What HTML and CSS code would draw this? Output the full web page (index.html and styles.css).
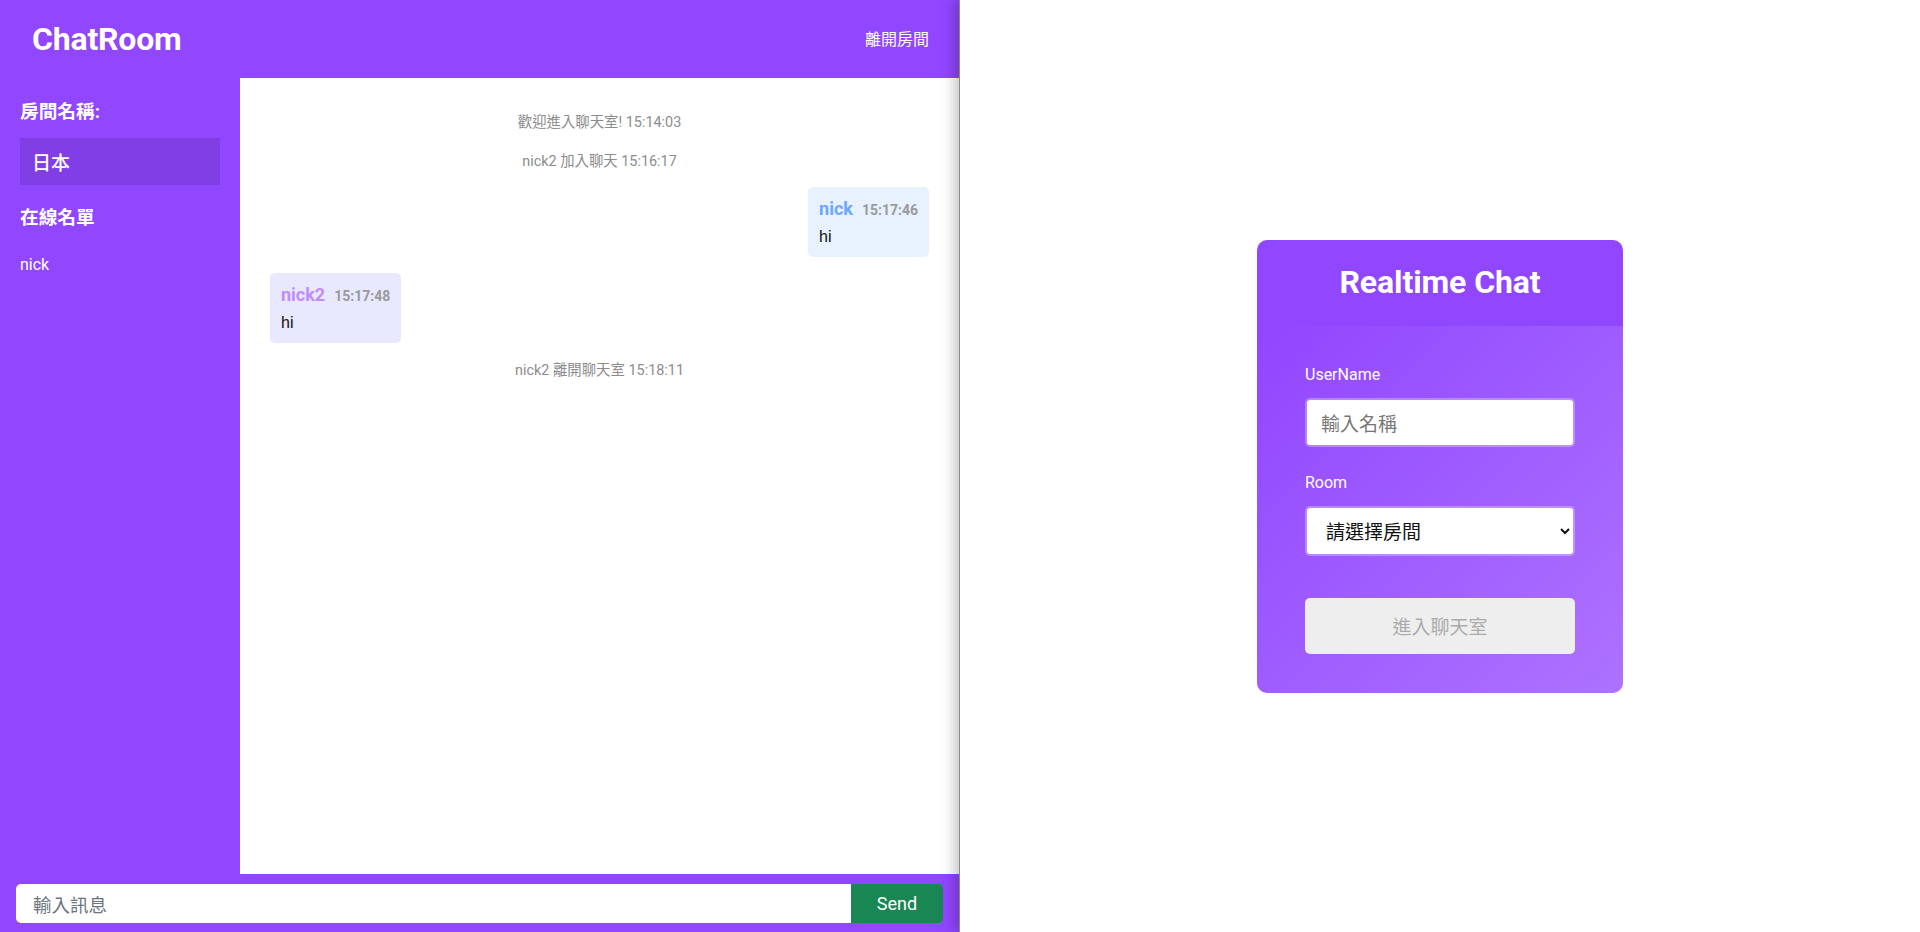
FILE: index.html
```html
<!DOCTYPE html>
<html lang="zh-Hant">
<head>
<meta charset="utf-8">
<title>ChatRoom</title>
<link rel="stylesheet" href="styles.css">
</head>
<body>
  <div class="left">
    <header class="topbar">
      <h1 class="brand">ChatRoom</h1>
      <a class="leave">離開房間</a>
    </header>
    <div class="main">
      <aside class="sidebar">
        <h3 class="side-title">房間名稱:</h3>
        <div class="room-name">日本</div>
        <h3 class="side-title users-title">在線名單</h3>
        <ul class="users">
          <li>nick</li>
        </ul>
      </aside>
      <section class="chat">
        <div class="sys">歡迎進入聊天室! 15:14:03</div>
        <div class="sys sys-last">nick2 加入聊天 15:16:17</div>
        <div class="bubble self">
          <div class="meta"><span class="name">nick</span><span class="time">15:17:46</span></div>
          <div class="text">hi</div>
        </div>
        <div class="bubble other">
          <div class="meta"><span class="name">nick2</span><span class="time">15:17:48</span></div>
          <div class="text">hi</div>
        </div>
        <div class="sys">nick2 離開聊天室 15:18:11</div>
      </section>
    </div>
    <form class="composer">
      <input class="msg-input" type="text" placeholder="輸入訊息">
      <button class="send" type="button">Send</button>
    </form>
  </div>
  <div class="right">
    <div class="card">
      <div class="card-head">
        <h2 class="card-title">Realtime Chat</h2>
      </div>
      <div class="card-body">
        <label class="label">UserName</label>
        <input class="field" type="text" placeholder="輸入名稱">
        <label class="label room-label">Room</label>
        <select class="field select">
          <option>請選擇房間</option>
        </select>
        <button class="join" type="button" disabled>進入聊天室</button>
      </div>
    </div>
  </div>
</body>
</html>
```

FILE: styles.css
```css
* { box-sizing: border-box; }

html, body {
  margin: 0;
  height: 100%;
}

body {
  display: flex;
  height: 932px;
  font-family: Roboto, "Noto Sans CJK TC", sans-serif;
  background: #ffffff;
  overflow: hidden;
}

.left {
  width: 959px;
  flex: none;
  display: flex;
  flex-direction: column;
  background: #9146ff;
  color: #fff;
}

.topbar {
  height: 78px;
  flex: none;
  display: flex;
  align-items: center;
  justify-content: space-between;
  padding: 0 30px 0 32px;
}

.brand {
  margin: 0;
  font-size: 32px;
  font-weight: 700;
  line-height: 40px;
  letter-spacing: -0.2px;
}

.leave {
  font-size: 16px;
  line-height: 22px;
  margin-bottom: 2px;
  color: #fff;
  font-family: "Noto Sans CJK TC", sans-serif;
  cursor: pointer;
}

.main {
  flex: 1;
  display: flex;
  min-height: 0;
}

.sidebar {
  width: 240px;
  flex: none;
  padding: 20px 20px;
}

.side-title {
  margin: 0;
  font-size: 18.7px;
  font-weight: 700;
  line-height: 28px;
}

.room-name {
  margin-top: 12px;
  height: 47px;
  display: flex;
  align-items: center;
  padding-left: 12px;
  background: rgba(0, 0, 0, 0.1);
  font-size: 19px;
  font-weight: 500;
}

.users-title {
  margin-top: 19px;
}

.users {
  list-style: none;
  margin: 21px 0 0;
  padding: 0;
  font-size: 16px;
  line-height: 24px;
}

.chat {
  flex: 1;
  background: #fff;
  padding: 33px 30px;
  display: flex;
  flex-direction: column;
  align-items: flex-start;
}

.sys {
  align-self: stretch;
  text-align: center;
  font-size: 14.4px;
  line-height: 23px;
  color: #8c8c8c;
  margin-bottom: 16px;
}

.sys.sys-last {
  margin-bottom: 14px;
}

.bubble {
  border-radius: 5px;
  padding: 8px 11px 8px;
  margin-bottom: 16px;
}

.bubble.self {
  align-self: flex-end;
  background: #e7f1ff;
}

.bubble.other {
  background: #e8e8ff;
}

.meta {
  font-size: 18px;
  line-height: 28px;
  height: 28px;
  white-space: nowrap;
}

.name {
  font-size: 18px;
  font-weight: 700;
}

.self .name { color: #6ea8fe; }
.other .name { color: #be8cff; }

.time {
  margin-left: 9px;
  font-size: 14px;
  line-height: 1;
  font-weight: 700;
  color: #9a9a9a;
}

.text {
  margin-top: 2px;
  font-family: "Liberation Sans", Arial, sans-serif;
  font-size: 16px;
  line-height: 24px;
  height: 24px;
  color: #111;
}

.composer {
  height: 58px;
  flex: none;
  margin: 0;
  display: flex;
  padding: 10px 16px 9px;
}

.msg-input {
  flex: 1;
  height: 39px;
  border: none;
  border-radius: 5px 0 0 5px;
  padding: 0 17px;
  font-family: "Noto Sans CJK TC", Roboto, sans-serif;
  font-size: 18.5px;
  color: #222;
  outline: none;
  background: #fff;
}

.msg-input::placeholder { color: #6c757d; }

.send {
  width: 92px;
  height: 39px;
  border: none;
  border-radius: 0 5px 5px 0;
  background: #198754;
  color: #fff;
  font-family: Roboto, sans-serif;
  font-size: 18px;
  padding: 0;
}

.right {
  flex: 1;
  position: relative;
  border-left: 1px solid #8a8a8a;
  box-shadow: -5px 0 12px rgba(0, 0, 0, 0.22);
  background: #fff;
  display: flex;
  align-items: center;
  justify-content: center;
}

.card {
  width: 366px;
  border-radius: 10px;
  overflow: hidden;
  color: #fff;
}

.card-head {
  height: 86px;
  background: #9146ff;
  display: flex;
  align-items: center;
  justify-content: center;
}

.card-title {
  margin: 0 0 2px;
  font-size: 32px;
  font-weight: 700;
  line-height: 40px;
  letter-spacing: -0.1px;
}

.card-body {
  background: linear-gradient(135deg, #9146ff 0%, #ad72ff 100%);
  padding: 37px 48px 39px;
  display: flex;
  flex-direction: column;
}

.label {
  font-size: 16px;
  line-height: 24px;
  margin-bottom: 11px;
}

.room-label {
  margin-top: 24px;
}

.field {
  width: 100%;
  height: 49px;
  border: 2px solid rgba(255, 255, 255, 0.3);
  background-clip: padding-box;
  border-radius: 5px;
  background-color: #fff;
  padding: 0 14px;
  font-family: "Noto Sans CJK TC", Roboto, sans-serif;
  font-size: 19px;
  color: #111;
  outline: none;
}

.field::placeholder { color: #777; }

.select {
  height: 50px;
  padding: 0 8px 0 15px;
}

.join {
  margin-top: 42px;
  height: 56px;
  border: none;
  border-radius: 5px;
  background: #eeeeee;
  color: #ababab;
  font-family: "Noto Sans CJK TC", Roboto, sans-serif;
  font-size: 19px;
}
```
